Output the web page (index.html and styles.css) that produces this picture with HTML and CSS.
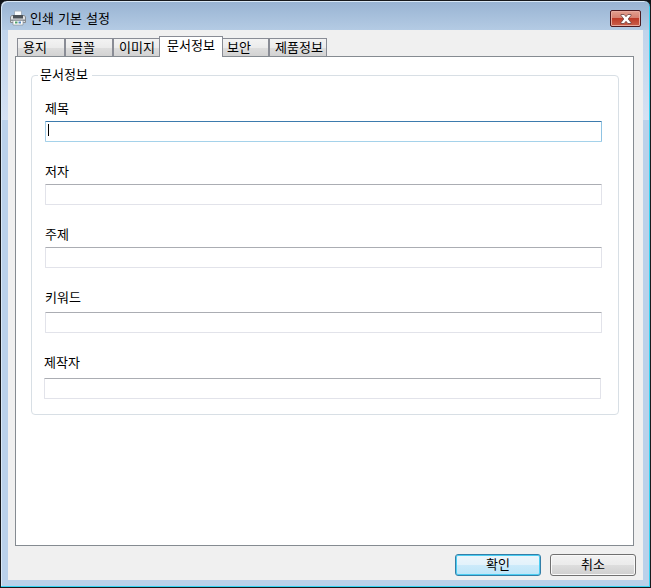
FILE: index.html
```html
<!DOCTYPE html>
<html lang="ko">
<head>
<meta charset="utf-8">
<title>인쇄 기본 설정</title>
<link rel="stylesheet" href="styles.css">
</head>
<body>
<div class="window">
  <header class="titlebar">
    <svg class="printer" width="16" height="16" viewBox="0 0 16 16">
      <path d="M4.500 1h7v5h-7z" fill="#fafcfd" stroke="#a3b1c0"/>
      <path d="M1.500 5.500h13l1 1.500v5.500H.5V7z" fill="#dfe1e3" stroke="#85898e"/>
      <path d="M3 5h10v3.500H3z" fill="#4c5258"/>
      <path d="M1 9.500h14V11H1z" fill="#8c9196"/>
      <path d="M3 10.500h10v4.500H3z" fill="#fff" stroke="#8b949b" stroke-width=".7"/>
      <path d="M5 12.500h2.500" stroke="#52a06c" stroke-width="2"/>
      <path d="M8.500 12.500H11" stroke="#5689c5" stroke-width="2"/>
    </svg>
    <h1 class="title">인쇄 기본 설정</h1>
    <button class="close" aria-label="닫기">
      <svg width="12" height="10" viewBox="0 0 12 10">
        <path d="M1 .5h3.200L6 2.700 7.800.5H11v1L8.200 5 11 8.500v1H7.800L6 7.300 4.200 9.500H1v-1L3.800 5 1 1.500z" fill="#fff" stroke="#69403f" stroke-width=".8"/>
      </svg>
    </button>
  </header>
  <main class="client">
    <nav class="tabs">
      <span class="tab">용지</span>
      <span class="tab tab-font">글꼴</span>
      <span class="tab tab-image">이미지</span>
      <span class="tab active">문서정보</span>
      <span class="tab tab-security">보안</span>
      <span class="tab tab-product">제품정보</span>
    </nav>
    <section class="page">
      <div class="group">
        <span class="legend">문서정보</span>
        <div class="field"><label>제목</label><div class="input focused"><i class="caret"></i></div></div>
        <div class="field"><label>저자</label><div class="input"></div></div>
        <div class="field"><label>주제</label><div class="input"></div></div>
        <div class="field keyword"><label>키워드</label><div class="input"></div></div>
        <div class="field producer"><label>제작자</label><div class="input"></div></div>
      </div>
    </section>
    <footer class="actions">
      <button class="button default">확인</button>
      <button class="button">취소</button>
    </footer>
  </main>
</div>
</body>
</html>
```
FILE: styles.css
```css
* { box-sizing: border-box; }
body {
  margin: 0;
  background: #101418;
  font: 13px/18px "Noto Sans CJK KR", sans-serif;
  color: #000;
}
.window {
  width: 651px;
  height: 588px;
  padding: 0 7px 7px;
  border: 1px solid #17191c;
  border-radius: 7px 7px 0 0;
  box-shadow: inset -1px -1px #35d3f3, inset 1px 1px #d9e8f6;
  background:
    linear-gradient(#98b3d2, #b4cbe4 29px, transparent 29px),
    linear-gradient(#b9cfe8, #d5e1f3 119px, #bad1ea 119px);
}
.titlebar {
  display: flex;
  height: 29px;
  padding: 9px 2px 0 2px;
}
.printer { flex: none; margin-top: 0; }
.title {
  flex: 1;
  margin: -1px 0 0 4px;
  font: inherit;
  line-height: 18px;
  word-spacing: .5px;
}
.close {
  display: flex;
  align-items: center;
  justify-content: center;
  width: 31px;
  height: 17px;
  padding: 0;
  border: 1px solid #4d1a20;
  border-radius: 2px;
  background: linear-gradient(#e2a090, #d68070 46%, #bd3b28 50%, #ca604c);
  box-shadow: inset 0 0 0 1px #e8aa9e;
}
.client {
  display: flex;
  flex-direction: column;
  height: 550px;
  padding: 6px 9px 0 7px;
  background: #f0f0f0;
}
.tabs {
  display: flex;
  align-items: flex-end;
  height: 21px;
  padding-left: 2px;
}
.tab {
  width: 48px;
  height: 19px;
  padding-left: 5px;
  border: 1px solid #898c95;
  line-height: 16px;
  white-space: nowrap;
  background: linear-gradient(#f3f3f3, #ebebeb 50%, #dedede 51%, #d2d2d2);
}
.tab-image { width: 47px; padding-left: 5px; }
.tab.active {
  position: relative;
  width: 64px;
  height: 21px;
  padding-left: 7px;
  margin-left: -1px;
  border-bottom: 0;
  line-height: 16px;
  background: #fff;
}
.tab-security { width: 47px; margin-left: -1px; padding-left: 4px; }
.tab-product { width: 58px; padding-left: 5px; }
.page {
  height: 490px;
  margin-top: -1px;
  padding: 18px 14px 0 15px;
  border: 1px solid #858b91;
  background: #fff;
}
.group {
  height: 340px;
  border: 1px solid #d8dfe5;
  border-radius: 4px;
  padding: 0 16px 0 13px;
}
.legend {
  display: block;
  width: 54px;
  height: 18px;
  margin: -11px 0 16px -7px;
  padding-left: 2px;
  background: #fff;
}
.field { height: 63px; }
.field label { display: block; height: 22px; line-height: 18px; }
.input {
  height: 21px;
  border: 1px solid #e2e3ea;
  border-top-color: #abadb3;
  border-radius: 1px;
  background: #fff;
}
.input.focused {
  padding: 2px 0 0 2px;
  border-color: #3d7bad #8fc3e3 #a5d2ea #a5cde7;
}
.caret { display: block; width: 1px; height: 12px; background: #000; }
.keyword { height: 65px; }
.keyword .input { margin-top: 2px; }
.producer { margin: 0 1px 0 -1px; }
.producer .input { margin-top: 3px; }
.actions {
  display: flex;
  justify-content: flex-end;
  gap: 9px;
  margin: 8px -2px 0 0;
}
.button {
  width: 86px;
  height: 22px;
  padding: 0 0 2px;
  border: 1px solid #707070;
  border-radius: 3px;
  box-shadow: inset 0 0 0 1px #f9f9f9;
  background: linear-gradient(#f2f2f2, #ebebeb 50%, #dddddd 51%, #cfcfcf);
  font: inherit;
  line-height: 18px;
  color: #000;
}
.default {
  border-color: #347fa8;
  box-shadow: inset 0 0 0 1px #4bcdf2;
  background: linear-gradient(#edf6fb, #e2f2fb 50%, #cceafa 51%, #bce5f8);
}
```
